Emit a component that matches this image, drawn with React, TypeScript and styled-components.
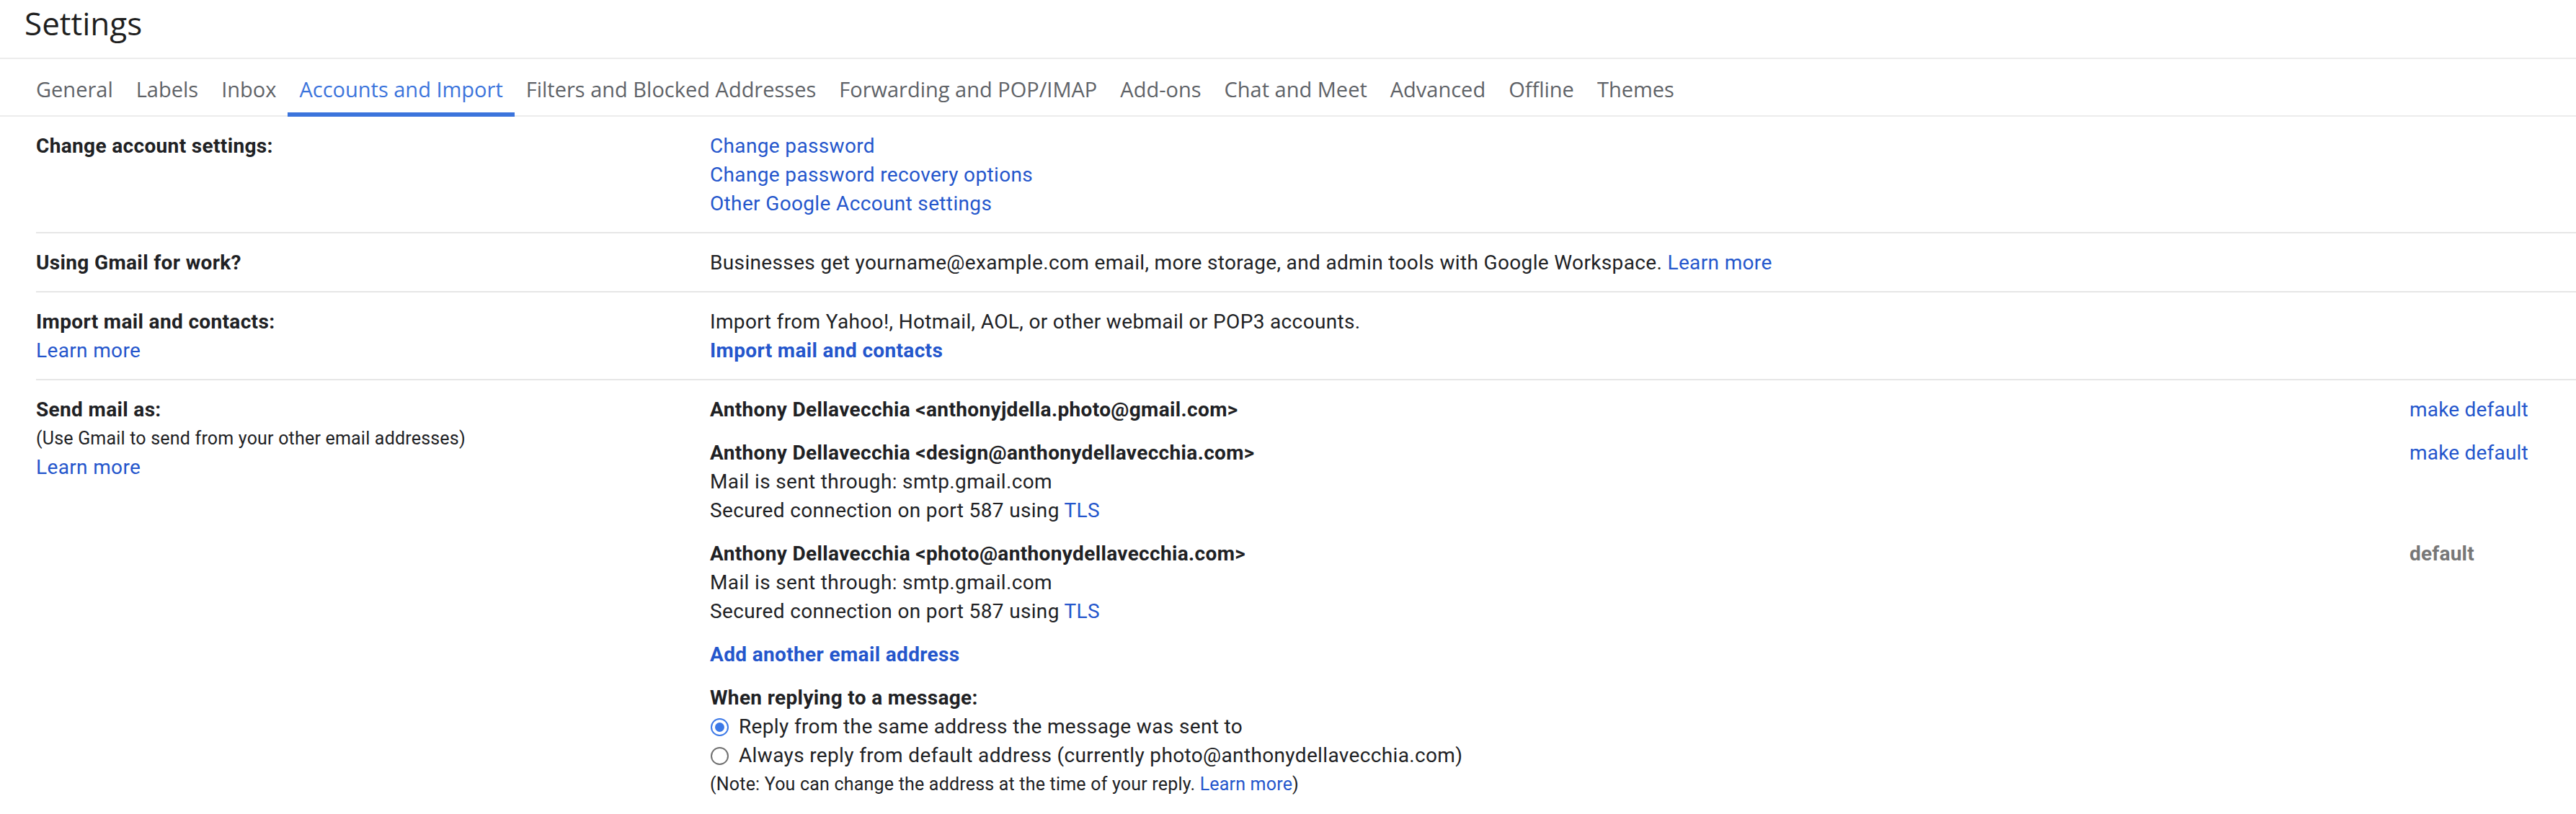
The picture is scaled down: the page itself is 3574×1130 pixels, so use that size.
import React from "react";
import styled, { createGlobalStyle } from "styled-components";

const GlobalStyle = createGlobalStyle`
  body {
    margin: 0;
    background: #ffffff;
    font-family: Roboto, "Liberation Sans", Arial, sans-serif;
    color: #202124;
  }
`;

const Page = styled.div`
  width: 100%;
  min-height: 1130px;
`;

const Header = styled.header`
  height: 82px;
  display: flex;
  align-items: center;
  padding: 0 0 16px 34px;
  box-sizing: border-box;
  border-bottom: 2px solid #ececec;
`;

const Title = styled.h1`
  margin: 0;
  font-family: "Open Sans", Roboto, sans-serif;
  font-size: 44px;
  font-weight: 400;
  color: #1f1f1f;
`;

const TabBar = styled.nav`
  display: flex;
  padding-left: 34px;
  border-bottom: 2px solid #ececec;
`;

const Tab = styled.div<{ $active?: boolean }>`
  height: 80px;
  box-sizing: border-box;
  display: flex;
  align-items: center;
  padding: 8px 16px 0;
  margin-bottom: -2px;
  border-bottom: 6px solid ${(p) => (p.$active ? "#3b74dc" : "transparent")};
  font-family: "Open Sans", Roboto, sans-serif;
  font-size: 29px;
  color: ${(p) => (p.$active ? "#3b74dc" : "#5f6368")};
  white-space: nowrap;
  cursor: pointer;
`;

const Table = styled.div`
  margin-left: 50px;
`;

const Row = styled.section<{ $last?: boolean }>`
  display: grid;
  grid-template-columns: 935px 1fr;
  padding: 21px 0 19px;
  border-bottom: ${(p) => (p.$last ? "none" : "2px solid #e6e6e6")};
  font-size: 28px;
  letter-spacing: 0.35px;
  line-height: 40px;
`;

const Label = styled.div`
  font-weight: 700;
`;

const Hint = styled.div`
  font-size: 25px;
  letter-spacing: 0.2px;
`;

const Line = styled.div<{ $bold?: boolean }>`
  font-weight: ${(p) => (p.$bold ? 700 : 400)};
  white-space: nowrap;
`;

const Link = styled.a<{ $bold?: boolean }>`
  color: #2456cc;
  text-decoration: none;
  font-weight: ${(p) => (p.$bold ? 700 : 400)};
  cursor: pointer;
`;

const Block = styled.div`
  display: block;
  margin-bottom: 20px;
`;

const Identity = styled.div`
  display: grid;
  grid-template-columns: 1fr 231px;
  margin-bottom: 20px;
`;

const Action = styled.div<{ $current?: boolean }>`
  font-weight: ${(p) => (p.$current ? 700 : 400)};
  color: ${(p) => (p.$current ? "#777777" : "#2456cc")};
  letter-spacing: 0.2px;
  cursor: ${(p) => (p.$current ? "default" : "pointer")};
`;

const Option = styled.label`
  display: flex;
  align-items: center;
  gap: 14px;
  white-space: nowrap;
`;

const Radio = styled.span<{ $checked?: boolean }>`
  width: 25px;
  height: 25px;
  box-sizing: border-box;
  border-radius: 50%;
  border: 2px solid ${(p) => (p.$checked ? "#3b78e7" : "#707070")};
  display: flex;
  align-items: center;
  justify-content: center;
  margin-left: 1px;
  &::after {
    content: "";
    width: 13px;
    height: 13px;
    border-radius: 50%;
    background: ${(p) => (p.$checked ? "#3b78e7" : "transparent")};
  }
`;

const tabs = [
  "General",
  "Labels",
  "Inbox",
  "Accounts and Import",
  "Filters and Blocked Addresses",
  "Forwarding and POP/IMAP",
  "Add-ons",
  "Chat and Meet",
  "Advanced",
  "Offline",
  "Themes",
];

const identities = [
  { name: "Anthony Dellavecchia <anthonyjdella.photo@gmail.com>", smtp: false, current: false },
  { name: "Anthony Dellavecchia <design@anthonydellavecchia.com>", smtp: true, current: false },
  { name: "Anthony Dellavecchia <photo@anthonydellavecchia.com>", smtp: true, current: true },
];

export default function App() {
  return (
    <Page>
      <GlobalStyle />
      <Header>
        <Title>Settings</Title>
      </Header>
      <TabBar>
        {tabs.map((t) => (
          <Tab key={t} $active={t === "Accounts and Import"}>
            {t}
          </Tab>
        ))}
      </TabBar>
      <Table>
        <Row>
          <Label>Change account settings:</Label>
          <div>
            <Line><Link>Change password</Link></Line>
            <Line><Link>Change password recovery options</Link></Line>
            <Line><Link>Other Google Account settings</Link></Line>
          </div>
        </Row>
        <Row>
          <Label>Using Gmail for work?</Label>
          <Line>
            Businesses get yourname@example.com email, more storage, and admin tools with Google
            Workspace. <Link>Learn more</Link>
          </Line>
        </Row>
        <Row>
          <div>
            <Label>Import mail and contacts:</Label>
            <Line><Link>Learn more</Link></Line>
          </div>
          <div>
            <Line>Import from Yahoo!, Hotmail, AOL, or other webmail or POP3 accounts.</Line>
            <Line><Link $bold>Import mail and contacts</Link></Line>
          </div>
        </Row>
        <Row $last>
          <div>
            <Label>Send mail as:</Label>
            <Hint>(Use Gmail to send from your other email addresses)</Hint>
            <Line><Link>Learn more</Link></Line>
          </div>
          <div>
            {identities.map((id) => (
              <Identity key={id.name}>
                <div>
                  <Line $bold>{id.name}</Line>
                  {id.smtp && (
                    <>
                      <Line>Mail is sent through: smtp.gmail.com</Line>
                      <Line>
                        Secured connection on port 587 using <Link>TLS</Link>
                      </Line>
                    </>
                  )}
                </div>
                <Action $current={id.current}>{id.current ? "default" : "make default"}</Action>
              </Identity>
            ))}
            <Block>
              <Link $bold>Add another email address</Link>
            </Block>
            <div>
              <Line $bold>When replying to a message:</Line>
              <Option>
                <Radio $checked />
                Reply from the same address the message was sent to
              </Option>
              <Option>
                <Radio />
                Always reply from default address (currently photo@anthonydellavecchia.com)
              </Option>
              <Hint>
                (Note: You can change the address at the time of your reply. <Link>Learn more</Link>)
              </Hint>
            </div>
          </div>
        </Row>
      </Table>
    </Page>
  );
}
